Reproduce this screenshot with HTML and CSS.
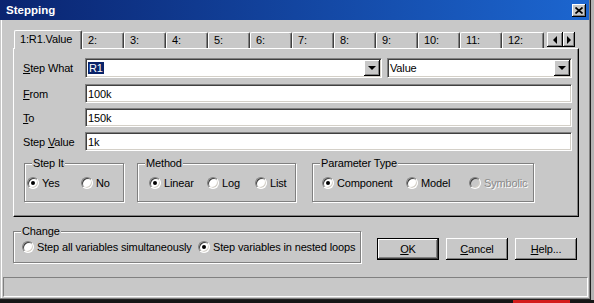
FILE: index.html
```html
<!DOCTYPE html>
<html lang="en">
<head>
  <meta charset="UTF-8" />
  <meta name="viewport" content="width=device-width, initial-scale=1.0"/>
  <title>Stepping</title>
  <link rel="stylesheet" href="styles.css">
</head>
<body>
  <div class="screen">
    <div class="top">
      <div class="window">
        <div class="titlebar">
          <span class="title">Stepping</span>
          <span class="close">
            <svg width="8" height="7" viewBox="0 0 8 7"><path d="M0.5 0.5 L7.5 6.5 M7.5 0.5 L0.5 6.5" stroke="#000" stroke-width="1.7" fill="none"/></svg>
          </span>
        </div>

        <div class="client">
          <div class="tabs">
            <div class="tab active">1:R1.Value</div>
            <div class="tab">2:</div>
            <div class="tab">3:</div>
            <div class="tab">4:</div>
            <div class="tab">5:</div>
            <div class="tab">6:</div>
            <div class="tab">7:</div>
            <div class="tab">8:</div>
            <div class="tab">9:</div>
            <div class="tab">10:</div>
            <div class="tab">11:</div>
            <div class="tab">12:</div>
            <div class="spin">
              <span class="spin-btn"><span class="arrow-left"></span></span>
              <span class="spin-btn narrow"><span class="arrow-right"></span></span>
            </div>
          </div>

          <div class="panel">
            <div class="row row-combo">
              <label><u>S</u>tep What</label>
              <div class="field combo wide"><span class="sel">R1</span><span class="drop"><span class="arrow-down"></span></span></div>
              <div class="field combo narrow"><span>Value</span><span class="drop"><span class="arrow-down"></span></span></div>
            </div>
            <div class="row">
              <label><u>F</u>rom</label>
              <div class="field">100k</div>
            </div>
            <div class="row">
              <label><u>T</u>o</label>
              <div class="field">150k</div>
            </div>
            <div class="row">
              <label>Step <u>V</u>alue</label>
              <div class="field">1k</div>
            </div>

            <div class="groups">
              <div class="group g-step">
                <span class="legend">Step It</span>
                <div class="opts">
                  <span class="opt opt-yes"><span class="radio checked"></span>Yes</span>
                  <span class="opt"><span class="radio"></span>No</span>
                </div>
              </div>
              <div class="group g-method">
                <span class="legend">Method</span>
                <div class="opts">
                  <span class="opt opt-linear"><span class="radio checked"></span>Linear</span>
                  <span class="opt opt-log"><span class="radio"></span>Log</span>
                  <span class="opt"><span class="radio"></span>List</span>
                </div>
              </div>
              <div class="group g-param">
                <span class="legend">Parameter Type</span>
                <div class="opts">
                  <span class="opt opt-component"><span class="radio checked"></span>Component</span>
                  <span class="opt opt-model"><span class="radio"></span>Model</span>
                  <span class="opt disabled"><span class="radio"></span>Symbolic</span>
                </div>
              </div>
            </div>
          </div>

          <div class="bottom">
            <div class="group g-change">
              <span class="legend">Change</span>
              <div class="opts">
                <span class="opt opt-all"><span class="radio"></span>Step all variables simultaneously</span>
                <span class="opt"><span class="radio checked"></span>Step variables in nested loops</span>
              </div>
            </div>
            <div class="buttons">
              <div class="btn default"><span><u>O</u>K</span></div>
              <div class="btn"><span><u>C</u>ancel</span></div>
              <div class="btn"><span><u>H</u>elp...</span></div>
            </div>
          </div>
        </div>

        <div class="statusbar"></div>
      </div>
      <div class="edge"></div>
    </div>
    <div class="floor"><span class="red"></span></div>
  </div>
</body>
</html>
```

FILE: styles.css
```css
body {
  margin: 0;
  background: #161616;
  font-family: "Liberation Sans", Arial, sans-serif;
  font-size: 11px;
  letter-spacing: -0.15px;
  color: #000;
}
.screen {
  width: 594px;
  height: 303px;
  display: flex;
  flex-direction: column;
  overflow: hidden;
}
.top {
  display: flex;
  height: 300px;
}
.window {
  width: 591px;
  height: 300px;
  flex: none;
  box-sizing: border-box;
  background: #c8c8c8;
  display: flex;
  flex-direction: column;
  box-shadow: inset -1px -1px 0 #202020, inset -2px -2px 0 #808080, inset 1px 0 0 #c8c8c8, inset 2px 0 0 #fff;
}
.edge {
  flex: 1;
  background: #b4b4b4;
}
.floor {
  height: 3px;
  display: flex;
}
.floor .red {
  width: 57px;
  margin-left: 513px;
  background: #d41c1c;
}

/* title bar */
.titlebar {
  height: 20px;
  width: 589px;
  box-sizing: border-box;
  display: flex;
  align-items: center;
  padding: 0 3px 0 6px;
  background: linear-gradient(to right, #0a2470, #1c66d0);
}
.title {
  color: #fff;
  font-weight: bold;
  font-size: 11.5px;
  letter-spacing: 0;
}
.close {
  margin-left: auto;
  width: 14px;
  height: 13px;
  display: flex;
  align-items: center;
  justify-content: center;
  background: #c8c8c8;
  box-shadow: inset -1px -1px 0 #000, inset 1px 1px 0 #fff, inset -2px -2px 0 #808080;
}

.client {
  padding: 0 12px 0 13px;
  display: flex;
  flex-direction: column;
}

/* tabs */
.tabs {
  display: flex;
  align-items: flex-start;
  height: 18px;
  margin-top: 10px;
  padding-left: 1px;
}
.tab {
  box-sizing: border-box;
  width: 42px;
  height: 16px;
  margin-top: 2px;
  padding-left: 5px;
  line-height: 15px;
  border-top: 1px solid #fff;
  border-left: 1px solid #fff;
  border-right: 1px solid #404040;
  border-radius: 2px 2px 0 0;
  box-shadow: inset -1px 0 0 #808080;
  background: #c8c8c8;
}
.tab.active {
  width: 68px;
  height: 19px;
  margin-top: 0;
  line-height: 17px;
  position: relative;
  z-index: 1;
}
.spin {
  display: flex;
  margin-left: 3px;
  margin-top: 2px;
}
.spin-btn {
  box-sizing: border-box;
  width: 16px;
  height: 15px;
  display: flex;
  align-items: center;
  justify-content: center;
  background: #c8c8c8;
  box-shadow: inset -1px -1px 0 #000, inset 1px 1px 0 #fff, inset -2px -2px 0 #808080;
}
.spin-btn.narrow {
  width: 12px;
}
.arrow-left {
  border-top: 4px solid transparent;
  border-bottom: 4px solid transparent;
  border-right: 4px solid #000;
}
.arrow-right {
  border-top: 4px solid transparent;
  border-bottom: 4px solid transparent;
  border-left: 4px solid #000;
}
.arrow-down {
  border-left: 4px solid transparent;
  border-right: 4px solid transparent;
  border-top: 4px solid #000;
}

/* tab panel */
.panel {
  box-sizing: border-box;
  width: 566px;
  display: flex;
  flex-direction: column;
  padding: 9px 6px 14px 9px;
  border: 1px solid;
  border-color: #fff #000 #000 #fff;
  box-shadow: inset -1px -1px 0 #808080;
}
.row {
  display: flex;
  align-items: center;
  height: 19px;
  margin-top: 5px;
}
.row-combo {
  height: 20px;
  margin-top: 0;
  margin-bottom: 1px;
}
.row label {
  width: 62px;
  flex: none;
}
.field {
  flex: 1;
  height: 100%;
  box-sizing: border-box;
  display: flex;
  align-items: center;
  padding-left: 2px;
  background: #fff;
  border: 1px solid;
  border-color: #808080 #fff #fff #808080;
  box-shadow: inset 1px 1px 0 #404040, inset -1px -1px 0 #d4d0c8;
}
.combo {
  padding-right: 1px;
}
.combo.wide {
  flex: none;
  width: 297px;
}
.combo.narrow {
  margin-left: 5px;
}
.sel {
  background: #0a246a;
  color: #fff;
  line-height: 12px;
  padding: 0 1px;
}
.drop {
  margin-left: auto;
  width: 16px;
  height: 16px;
  box-sizing: border-box;
  display: flex;
  align-items: center;
  justify-content: center;
  background: #c8c8c8;
  box-shadow: inset -1px -1px 0 #000, inset 1px 1px 0 #fff, inset -2px -2px 0 #808080;
}

/* group boxes */
.groups {
  display: flex;
  align-items: flex-start;
  margin-top: 12px;
  padding-left: 1px;
}
.group {
  box-sizing: border-box;
  border: 1px solid #808080;
  box-shadow: 1px 1px 0 #fff, inset 1px 1px 0 #fff;
  padding-bottom: 9px;
}
.legend {
  display: table;
  margin: -7px 0 0 7px;
  padding: 0 1px;
  line-height: 13px;
  background: #c8c8c8;
}
.g-step {
  width: 100px;
}
.g-method {
  width: 159px;
  margin-left: 13px;
}
.g-param {
  width: 222px;
  margin-left: 16px;
}
.opts {
  display: flex;
  align-items: center;
  height: 18px;
  margin-top: 4px;
}
.g-step .opts { padding-left: 2px; }
.g-method .opts { padding-left: 11px; }
.g-param .opts { padding-left: 9px; }
.g-change .opts { padding-left: 8px; margin-top: 0; }
.opt {
  display: flex;
  align-items: center;
  flex: none;
}
.opt-yes { width: 54px; }
.opt-linear { width: 58px; }
.opt-log { width: 48px; }
.opt-component { width: 84px; }
.opt-model { width: 63px; }
.opt-all { width: 176px; }
.radio {
  box-sizing: border-box;
  width: 12px;
  height: 12px;
  margin-right: 3px;
  border-radius: 50%;
  display: flex;
  align-items: center;
  justify-content: center;
  background: #fff;
  border: 1px solid;
  border-color: #808080 #fff #fff #808080;
  box-shadow: inset 1px 1px 0 #404040, inset -1px -1px 0 #d4d0c8;
}
.radio.checked::after {
  content: "";
  width: 4px;
  height: 4px;
  border-radius: 50%;
  background: #000;
}
.opt.disabled {
  color: #8a8a8a;
  text-shadow: 1px 1px 0 #fff;
}
.opt.disabled .radio {
  background: #c8c8c8;
}

/* bottom */
.bottom {
  display: flex;
  align-items: flex-start;
  margin-top: 14px;
}
.g-change {
  width: 348px;
  padding-bottom: 6px;
}
.buttons {
  display: flex;
  gap: 7px;
  margin-left: 16px;
  margin-top: 7px;
}
.btn {
  box-sizing: border-box;
  width: 62px;
  height: 22px;
  display: flex;
  align-items: center;
  justify-content: center;
  box-shadow: inset -1px -1px 0 #000, inset 1px 1px 0 #fff, inset -2px -2px 0 #808080;
}
.btn.default {
  border: 1px solid #000;
  box-shadow: inset -1px -1px 0 #404040, inset 1px 1px 0 #fff, inset -2px -2px 0 #808080;
}

.statusbar {
  box-sizing: border-box;
  height: 20px;
  margin: 14px 3px 0 3px;
  border: 1px solid;
  border-color: #808080 #fff #fff #808080;
}
```
